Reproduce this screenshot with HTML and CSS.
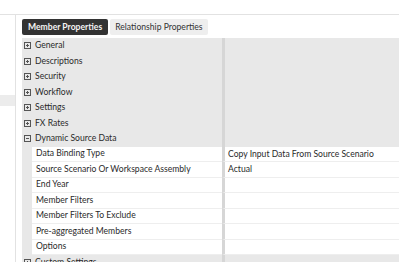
FILE: index.html
```html
<!DOCTYPE html>
<html lang="en">
<head>
  <meta charset="UTF-8">
  <title>Member Properties</title>
  <link rel="stylesheet" href="styles.css">
</head>
<body>

<div id="topBar"></div>

<div id="layout">
  <div id="sidebar">
    <div class="navSelected"></div>
  </div>

  <div id="main">
    <div id="tabs">
      <div class="tab active">Member Properties</div>
      <div class="tab">Relationship Properties</div>
    </div>

    <div id="grid">
      <div class="row group">
        <div class="name"><svg class="toggle" viewBox="0 0 7 7"><rect x="0.5" y="0.5" width="6" height="6"/><path d="M2 3.5h3M3.5 2v3"/></svg>General</div>
        <div class="value"></div>
      </div>
      <div class="row group">
        <div class="name"><svg class="toggle" viewBox="0 0 7 7"><rect x="0.5" y="0.5" width="6" height="6"/><path d="M2 3.5h3M3.5 2v3"/></svg>Descriptions</div>
        <div class="value"></div>
      </div>
      <div class="row group">
        <div class="name"><svg class="toggle" viewBox="0 0 7 7"><rect x="0.5" y="0.5" width="6" height="6"/><path d="M2 3.5h3M3.5 2v3"/></svg>Security</div>
        <div class="value"></div>
      </div>
      <div class="row group">
        <div class="name"><svg class="toggle" viewBox="0 0 7 7"><rect x="0.5" y="0.5" width="6" height="6"/><path d="M2 3.5h3M3.5 2v3"/></svg>Workflow</div>
        <div class="value"></div>
      </div>
      <div class="row group">
        <div class="name"><svg class="toggle" viewBox="0 0 7 7"><rect x="0.5" y="0.5" width="6" height="6"/><path d="M2 3.5h3M3.5 2v3"/></svg>Settings</div>
        <div class="value"></div>
      </div>
      <div class="row group">
        <div class="name"><svg class="toggle" viewBox="0 0 7 7"><rect x="0.5" y="0.5" width="6" height="6"/><path d="M2 3.5h3M3.5 2v3"/></svg>FX Rates</div>
        <div class="value"></div>
      </div>
      <div class="row group">
        <div class="name"><svg class="toggle" viewBox="0 0 7 7"><rect x="0.5" y="0.5" width="6" height="6"/><path d="M2 3.5h3"/></svg>Dynamic Source Data</div>
        <div class="value"></div>
      </div>

      <div class="row child">
        <div class="name">Data Binding Type</div>
        <div class="value">Copy Input Data From Source Scenario</div>
      </div>
      <div class="row child">
        <div class="name">Source Scenario Or Workspace Assembly</div>
        <div class="value">Actual</div>
      </div>
      <div class="row child">
        <div class="name">End Year</div>
        <div class="value"></div>
      </div>
      <div class="row child">
        <div class="name">Member Filters</div>
        <div class="value"></div>
      </div>
      <div class="row child">
        <div class="name">Member Filters To Exclude</div>
        <div class="value"></div>
      </div>
      <div class="row child">
        <div class="name">Pre-aggregated Members</div>
        <div class="value"></div>
      </div>
      <div class="row child">
        <div class="name">Options</div>
        <div class="value"></div>
      </div>

      <div class="row group">
        <div class="name"><svg class="toggle" viewBox="0 0 7 7"><rect x="0.5" y="0.5" width="6" height="6"/><path d="M2 3.5h3M3.5 2v3"/></svg>Custom Settings</div>
        <div class="value"></div>
      </div>
    </div>
  </div>
</div>

</body>
</html>
```

FILE: styles.css
```css
body {
  margin: 0;
  font-family: Lato, Arial, sans-serif;
  font-size: 8.6px;
  color: #2a2a2a;
  background: #fff;
  overflow: hidden;
}
#topBar {
  height: 14px;
  border-bottom: 1px solid #e2e2e2;
}
#layout {
  display: flex;
  height: 247px;
}
#sidebar {
  width: 15px;
  border-right: 1px solid #e2e2e2;
  flex-shrink: 0;
}
.navSelected {
  margin-top: 80px;
  height: 11px;
  background: #ececec;
}
#main {
  flex: 1;
  padding: 4px 0 0 6px;
}
#tabs {
  display: flex;
  gap: 2px;
  height: 16px;
  margin-bottom: 3px;
}
.tab {
  padding: 0 5px;
  line-height: 16px;
  font-size: 8.6px;
  background: #eeeeee;
  color: #333;
  border-radius: 2px;
}
.tab.active {
  padding: 0 6px;
  background: #333;
  color: #f4f4f4;
  font-weight: bold;
}
#grid {
  background: #e8e8e8;
}
.row {
  display: flex;
  height: 15.5px;
  line-height: 15.5px;
  white-space: nowrap;
}
.name {
  width: 200px;
  flex-shrink: 0;
  display: flex;
  align-items: center;
  padding-left: 2px;
  box-sizing: border-box;
  overflow: hidden;
}
.value {
  flex: 1;
  border-left: 3px solid #d6d6d6;
  padding-left: 3px;
}
.toggle {
  width: 7px;
  height: 7px;
  margin-right: 4px;
  fill: none;
  stroke: #555;
  stroke-width: 1;
}
.row.child .name {
  margin-left: 10px;
  width: 190px;
  padding-left: 4px;
  background: #fff;
  border-bottom: 1px solid #eeeeee;
}
.row.child .value {
  background: #fff;
  border-bottom: 1px solid #eeeeee;
}
```
